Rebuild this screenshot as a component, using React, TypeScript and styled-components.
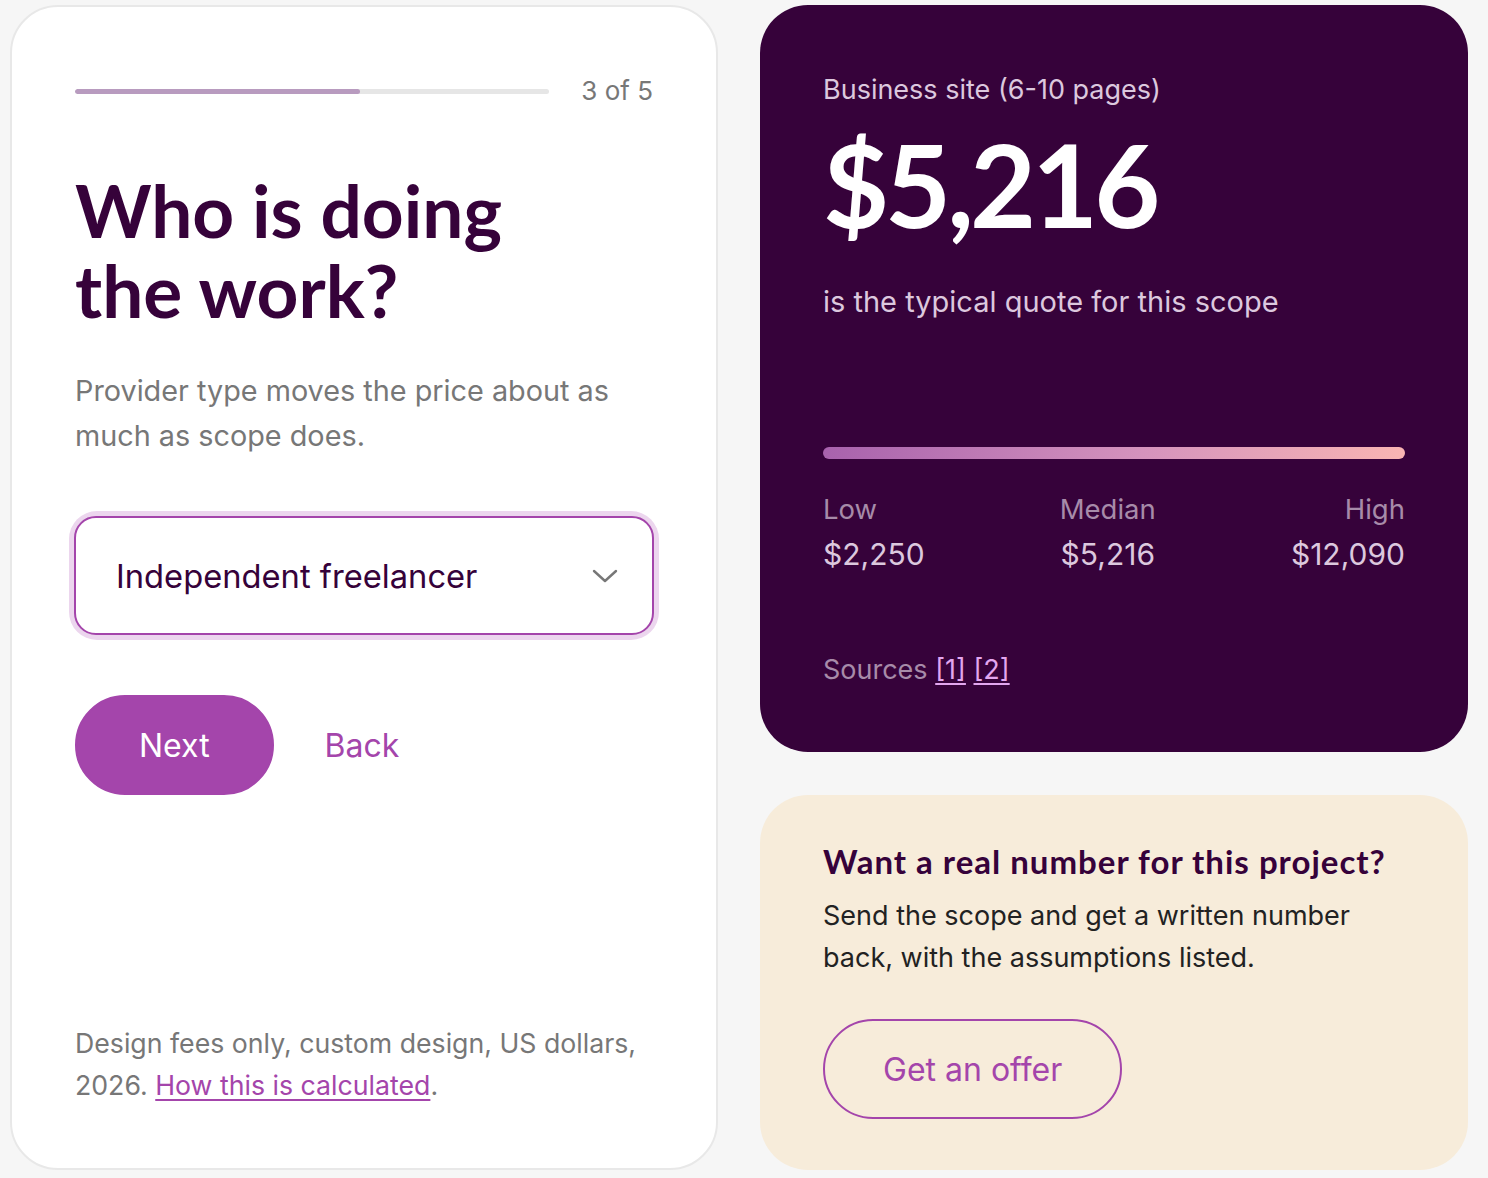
import styled, { createGlobalStyle } from "styled-components";

const GlobalStyle = createGlobalStyle`
  html, body {
    margin: 0;
    padding: 0;
    background: #f6f6f6;
  }
  body {
    font-family: Inter, "Liberation Sans", sans-serif;
    -webkit-font-smoothing: antialiased;
  }
  * {
    box-sizing: border-box;
  }
`;

const purple = "#a445ab";
const plum = "#36023a";

const Page = styled.div`
  display: grid;
  grid-template-columns: 708px 708px;
  column-gap: 42px;
  height: 1178px;
  padding: 5px 20px 8px 10px;
`;

const StepCard = styled.section`
  display: flex;
  flex-direction: column;
  background: #fff;
  border: 2px solid #e8e8e8;
  border-radius: 48px;
  padding: 66px 63px 62px 63px;
`;

const ProgressRow = styled.div`
  display: flex;
  align-items: center;
  gap: 32px;
`;

const Track = styled.div`
  flex: 1;
  height: 5px;
  border-radius: 3px;
  background: #e6e6e6;
  overflow: hidden;
`;

const Fill = styled.div`
  height: 100%;
  border-radius: 3px;
  background: #b89bbf;
`;

const StepCount = styled.span`
  font-size: 26px;
  line-height: 36px;
  color: #777;
`;

const Title = styled.h1`
  margin: 61px 0 0;
  font-family: Lato, "Noto Sans", sans-serif;
  font-weight: 700;
  font-size: 73px;
  line-height: 80px;
  letter-spacing: 0;
  color: ${plum};
`;

const Lead = styled.p`
  margin: 38px 0 0;
  font-size: 28.8px;
  line-height: 45px;
  color: #777;
`;

const SelectRing = styled.div`
  margin: 53px -6px 0;
  padding: 5px;
  border-radius: 28px;
  background: #ecd6ee;
`;

const SelectBox = styled.div`
  display: flex;
  align-items: center;
  justify-content: space-between;
  height: 119px;
  padding: 0 34px 0 40px;
  border: 2px solid ${purple};
  border-radius: 22px;
  background: #fff;
  font-size: 32.7px;
  color: ${plum};
`;

const Actions = styled.div`
  display: flex;
  align-items: center;
  gap: 51px;
  margin-top: 55px;
`;

const PillButton = styled.button<{ $outline?: boolean }>`
  height: 100px;
  padding: 0 ${(p) => (p.$outline ? "58px" : "62px")};
  border-radius: 50px;
  border: 2px solid ${purple};
  background: ${(p) => (p.$outline ? "transparent" : purple)};
  color: ${(p) => (p.$outline ? purple : "#fff")};
  font-family: inherit;
  font-size: 32px;
  cursor: pointer;
`;

const TextButton = styled.button`
  border: 0;
  background: none;
  padding: 0;
  font-family: inherit;
  font-size: 32px;
  color: ${purple};
  cursor: pointer;
`;

const Footnote = styled.p`
  margin: auto 0 0;
  font-size: 26.7px;
  line-height: 42px;
  color: #777;
`;

const Link = styled.a<{ $light?: boolean }>`
  color: ${(p) => (p.$light ? "#e3a6ef" : purple)};
  text-decoration: underline;
  text-underline-offset: 4px;
  text-decoration-thickness: 2px;
`;

const Side = styled.div`
  display: flex;
  flex-direction: column;
  gap: 43px;
`;

const QuoteCard = styled.section`
  flex: 1;
  display: flex;
  flex-direction: column;
  background: ${plum};
  border-radius: 48px;
  padding: 66px 63px 0 63px;
`;

const Scope = styled.div`
  font-size: 27px;
  line-height: 38px;
  color: #dcc8de;
`;

const Amount = styled.div`
  margin-top: 10px;
  font-family: Lato, "Noto Sans", sans-serif;
  font-weight: 700;
  font-size: 114px;
  line-height: 130px;
  letter-spacing: -4px;
  color: #fff;
`;

const Caption = styled.div`
  margin-top: 33px;
  font-size: 29px;
  line-height: 40px;
  color: #dcc8de;
`;

const RangeBar = styled.div`
  margin-top: 125px;
  height: 12px;
  border-radius: 6px;
  background: linear-gradient(90deg, #a862ad 0%, #d593bd 55%, #f9b5b3 100%);
`;

const RangeRow = styled.div`
  display: flex;
  justify-content: space-between;
  margin-top: 32px;
`;

const RangeCell = styled.div<{ $align: "left" | "center" | "right" }>`
  display: flex;
  flex-direction: column;
  gap: 7px;
  text-align: ${(p) => p.$align};
`;

const RangeLabel = styled.span`
  font-size: 27.5px;
  line-height: 36px;
  color: #a78ba9;
`;

const RangeValue = styled.span`
  font-size: 30px;
  line-height: 40px;
  color: #dcc8de;
`;

const Sources = styled.div`
  margin-top: 78px;
  font-size: 27px;
  line-height: 36px;
  color: #a78ba9;
`;

const OfferCard = styled.section`
  background: #f7ecda;
  border-radius: 48px;
  padding: 44px 63px 51px 63px;
`;

const OfferTitle = styled.h2`
  margin: 0;
  font-family: Lato, "Noto Sans", sans-serif;
  font-weight: 700;
  font-size: 33px;
  line-height: 44px;
  letter-spacing: 1px;
  color: ${plum};
`;

const OfferText = styled.p`
  margin: 12px 0 40px;
  font-size: 27px;
  line-height: 42px;
  color: #222;
`;

const Chevron = () => (
  <svg width="26" height="16" viewBox="0 0 26 16" fill="none">
    <path d="M2 3 L13 13 L24 3" stroke="#777" strokeWidth="2.4" strokeLinecap="round" strokeLinejoin="round" />
  </svg>
);

const ranges: { label: string; value: string; align: "left" | "center" | "right" }[] = [
  { label: "Low", value: "$2,250", align: "left" },
  { label: "Median", value: "$5,216", align: "center" },
  { label: "High", value: "$12,090", align: "right" },
];

const App = () => {
  const step = 3;
  const total = 5;
  return (
    <>
      <GlobalStyle />
      <Page>
        <StepCard>
          <ProgressRow>
            <Track>
              <Fill style={{ width: `${(step / total) * 100}%` }} />
            </Track>
            <StepCount>
              {step} of {total}
            </StepCount>
          </ProgressRow>
          <Title>
            Who is doing
            <br />
            the work?
          </Title>
          <Lead>Provider type moves the price about as much as scope does.</Lead>
          <SelectRing>
            <SelectBox>
              <span>Independent freelancer</span>
              <Chevron />
            </SelectBox>
          </SelectRing>
          <Actions>
            <PillButton>Next</PillButton>
            <TextButton>Back</TextButton>
          </Actions>
          <Footnote>
            Design fees only, custom design, US dollars, 2026.{" "}
            <Link href="#">How this is calculated</Link>.
          </Footnote>
        </StepCard>

        <Side>
          <QuoteCard>
            <Scope>Business site (6-10 pages)</Scope>
            <Amount>$5,216</Amount>
            <Caption>is the typical quote for this scope</Caption>
            <RangeBar />
            <RangeRow>
              {ranges.map((r) => (
                <RangeCell key={r.label} $align={r.align}>
                  <RangeLabel>{r.label}</RangeLabel>
                  <RangeValue>{r.value}</RangeValue>
                </RangeCell>
              ))}
            </RangeRow>
            <Sources>
              Sources <Link $light href="#">[1]</Link> <Link $light href="#">[2]</Link>
            </Sources>
          </QuoteCard>
          <OfferCard>
            <OfferTitle>Want a real number for this project?</OfferTitle>
            <OfferText>
              Send the scope and get a written number back, with the assumptions listed.
            </OfferText>
            <PillButton $outline>Get an offer</PillButton>
          </OfferCard>
        </Side>
      </Page>
    </>
  );
};

export default App;
